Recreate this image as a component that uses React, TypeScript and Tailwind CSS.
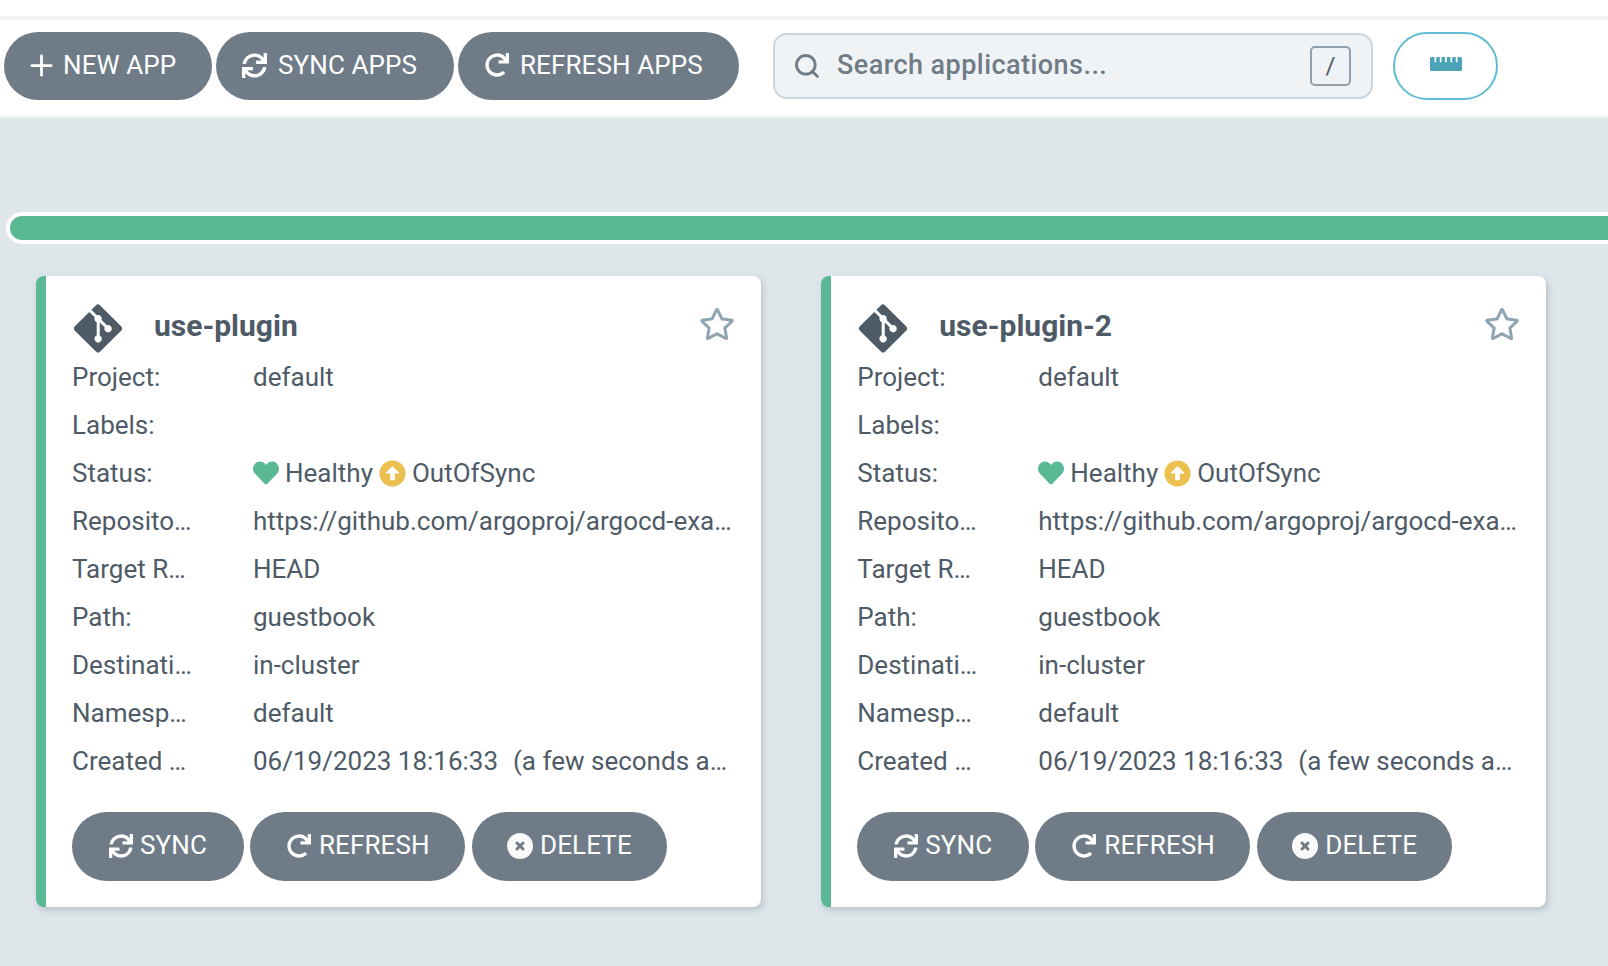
import { Plus, Search } from 'lucide-react';
import {
  FaArrowAltCircleUp,
  FaGitAlt,
  FaHeart,
  FaRedo,
  FaRegStar,
  FaRulerHorizontal,
  FaSync,
} from 'react-icons/fa';

const apps = ['use-plugin', 'use-plugin-2'];

function PillButton({ icon, label, className }: { icon: React.ReactNode; label: string; className: string }) {
  return (
    <button className={`flex items-center rounded-full bg-[#6f7c87] pb-[2px] text-[26px] tracking-[0.1px] text-white ${className}`}>
      {icon}
      <span>{label}</span>
    </button>
  );
}

function DeleteIcon() {
  return (
    <svg width="26" height="26" viewBox="0 0 26 26">
      <circle cx="13" cy="13" r="13" fill="#fafafa" />
      <path d="M10 10l6 6M16 10l-6 6" stroke="#6f7c87" strokeWidth="3" strokeLinecap="round" />
    </svg>
  );
}

function Row({ label, children }: { label: string; children?: React.ReactNode }) {
  return (
    <div className="flex h-[48px] items-center">
      <div className="w-[123px] truncate">{label}</div>
      <div className="ml-[58px] w-[480px] truncate">{children}</div>
    </div>
  );
}

function AppCard({ name }: { name: string }) {
  return (
    <div className="w-[725px] rounded-[8px] border-l-[10px] border-[#5ab994] bg-white pt-[28px] pr-[26px] pb-[26px] pl-[26px] shadow-[2px_3px_6px_rgba(90,110,125,0.3)]">
      <div className="flex h-[48px] items-center">
        <FaGitAlt className="ml-[2px] h-[55px] w-[48px] shrink-0 text-[#4e5b67]" />
        <div className="mb-[6px] ml-[32px] flex-1 text-[30px] font-bold text-[#4e5b67]">{name}</div>
        <FaRegStar className="mb-[8px] text-[36px] text-[#8fa4b1]" />
      </div>
      <div className="mt-[1px] text-[26px] text-[#4e5b67]">
        <Row label="Project:">default</Row>
        <Row label="Labels:" />
        <Row label="Status:">
          <span className="flex items-center">
            <FaHeart className="text-[26px] text-[#5ab994]" />
            <span className="ml-[6px]">Healthy</span>
            <FaArrowAltCircleUp className="ml-[6px] text-[27px] text-[#ecc04e]" />
            <span className="ml-[6px]">OutOfSync</span>
          </span>
        </Row>
        <Row label="Repository:">https://github.com/argoproj/argocd-example-apps</Row>
        <Row label="Target Revision:">HEAD</Row>
        <Row label="Path:">guestbook</Row>
        <Row label="Destination:">in-cluster</Row>
        <Row label="Namespace:">default</Row>
        <Row label="Created At:">
          06/19/2023 18:16:33 &nbsp;<span className="ml-[2px]">(a few seconds ago)</span>
        </Row>
      </div>
      <div className="mt-[27px] flex">
        <PillButton
          icon={<FaSync className="text-[24px]" />}
          label="SYNC"
          className="h-[69px] w-[172px] gap-[7px] pl-[37px]"
        />
        <PillButton
          icon={<FaRedo className="text-[24px]" />}
          label="REFRESH"
          className="ml-[6px] h-[69px] w-[215px] gap-[8px] pl-[37px]"
        />
        <PillButton
          icon={<DeleteIcon />}
          label="DELETE"
          className="ml-[7px] h-[69px] w-[195px] gap-[7px] pl-[35px]"
        />
      </div>
    </div>
  );
}

export default function App() {
  return (
    <div className="h-[966px] overflow-hidden bg-[#dee6ea] font-['Roboto',sans-serif]">
      {/* Top bar */}
      <div className="h-[16px] bg-white" />
      <div className="h-[4px] bg-[#eff3f5]" />
      <div className="flex h-[98px] items-start border-b-[2px] border-[#eff3f5] bg-white pt-[12px] pl-[4px]">
        <PillButton
          icon={<Plus size={33} strokeWidth={2} />}
          label="NEW APP"
          className="h-[68px] w-[208px] gap-[5px] pl-[21px]"
        />
        <PillButton
          icon={<FaSync className="text-[25px]" />}
          label="SYNC APPS"
          className="ml-[4px] h-[68px] w-[238px] gap-[11px] pl-[26px]"
        />
        <PillButton
          icon={<FaRedo className="text-[24px]" />}
          label="REFRESH APPS"
          className="ml-[4px] h-[68px] w-[281px] gap-[11px] pl-[27px]"
        />
        <div className="mt-[1px] ml-[34px] flex h-[66px] w-[600px] items-center rounded-[14px] border-[2px] border-[#cdd5dc] bg-[#eff3f5] pr-[20px] pl-[18px]">
          <Search size={28} strokeWidth={2.4} className="text-[#6f7c87]" />
          <span className="mb-[2px] ml-[16px] flex-1 text-[27px] font-medium tracking-[0.45px] text-[#6f7c87]">Search applications...</span>
          <span className="flex h-[40px] w-[41px] items-center justify-center rounded-[5px] border-[2px] border-[#8fa0ae] text-[24px] text-[#4e5b67]">/</span>
        </div>
        <button className="ml-[20px] flex h-[68px] w-[105px] items-center justify-center rounded-full border-[2px] border-[#5fbcd3] bg-white">
          <FaRulerHorizontal className="mb-[4px] text-[32px] text-[#4ca3b8]" />
        </button>
      </div>

      {/* Health bar */}
      <div className="mt-[94px] ml-[6px] h-[32px] w-[1700px] rounded-l-full border-[4px] border-white bg-[#5ab994]" />

      {/* Cards */}
      <div className="mt-[32px] ml-[36px] flex gap-[60.3px]">
        {apps.map((name) => (
          <AppCard key={name} name={name} />
        ))}
      </div>
    </div>
  );
}
